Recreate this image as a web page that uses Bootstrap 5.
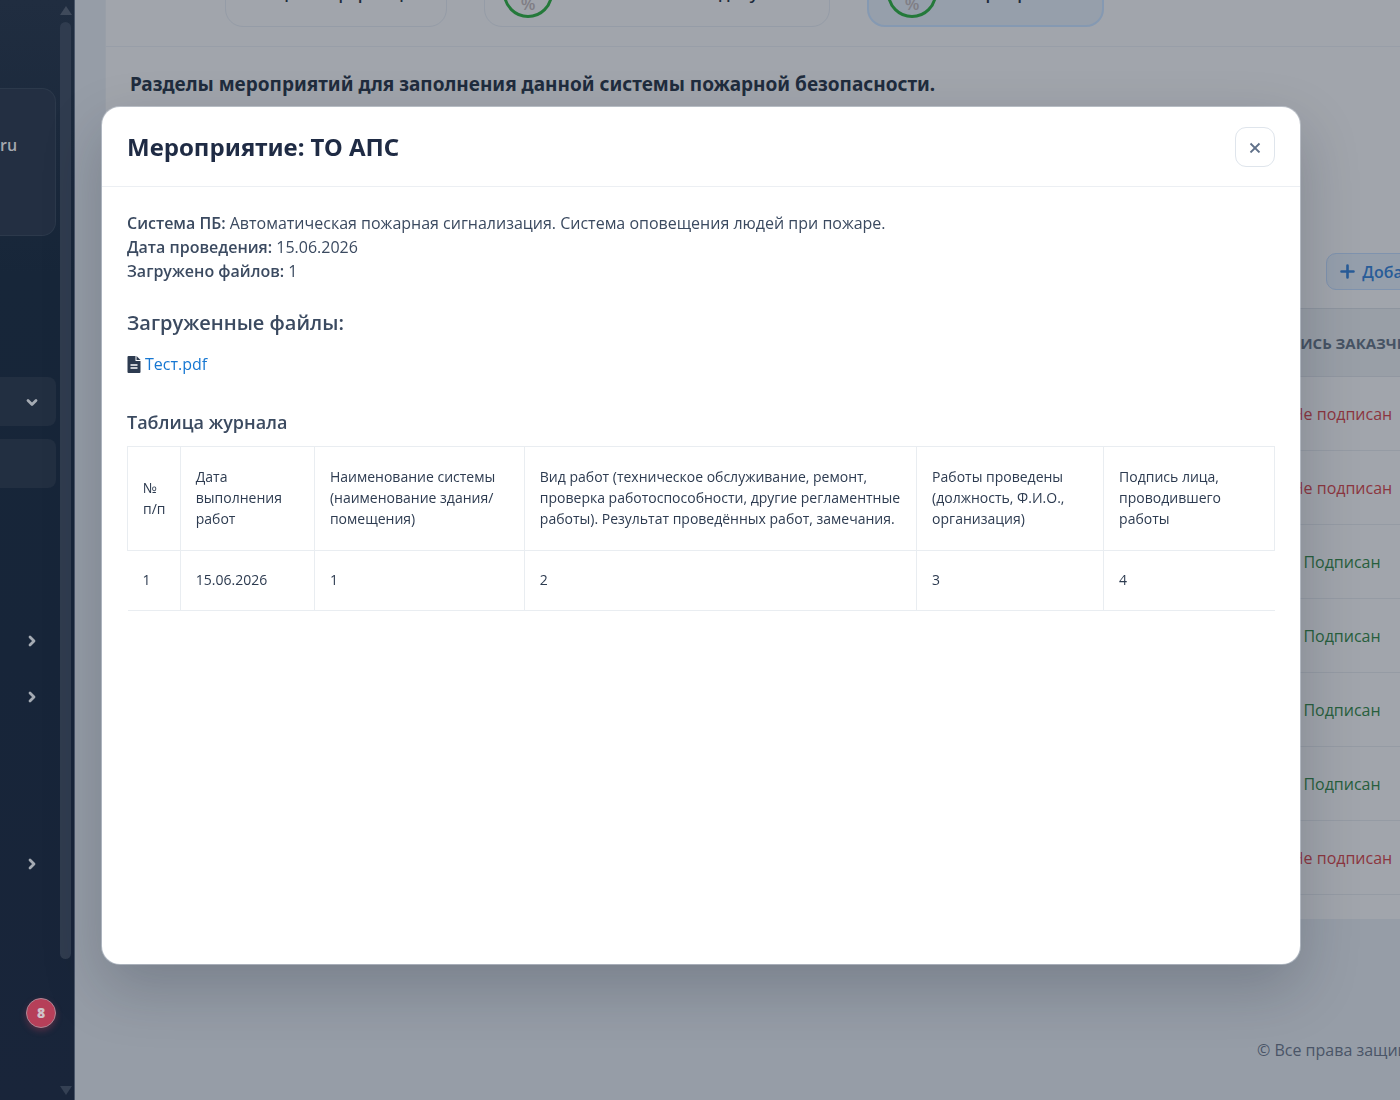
<!DOCTYPE html>
<html lang="ru">
<head>
<meta charset="utf-8">
<meta name="viewport" content="width=device-width, initial-scale=1">
<title>Мероприятие: ТО АПС</title>
<link href="https://cdn.jsdelivr.net/npm/bootstrap@5.3.0/dist/css/bootstrap.min.css" rel="stylesheet">
<style>
  body { font-family: "Open Sans", "Noto Sans", sans-serif; font-size: 16px; line-height: 24px; color: #3b4a60; background: #969da7; }
  .app-shell { height: 100vh; overflow: hidden; }

  /* sidebar */
  .side-panel { width: 75px; background: linear-gradient(180deg, #202d40 0%, #172639 25%, #172539 60%, #19253a 100%); border-right: 1px solid #4a5669; }
  .side-content { width: 56px; }
  .user-box { height: 148px; margin-top: 88px; padding-top: 44px; background: #232f42; border: 1px solid #2c394b; border-left: 0; border-radius: 0 14px 14px 0; color: #a5a8ae; font-size: 16px; font-weight: 600; white-space: nowrap; }
  .side-link { height: 49px; padding-right: 16px; color: #a5abb3; border-radius: 0 8px 8px 0; }
  .side-link.is-open { background: #222f41; }
  .menu-top { margin-top: 141px; gap: 13px; }
  .menu-mid { margin-top: 128px; gap: 7px; }
  .menu-low { margin-top: 118px; }
  .count-pill { width: 30px; height: 30px; margin-top: 110px; background: #b63f59; border: 1px solid #ad8795; color: #cfc3ca; font-size: 14px; font-weight: 800; box-shadow: 0 3px 6px rgba(182, 63, 89, .35); }
  .side-scroll { width: 18px; padding: 6px 3px 5px 4px; gap: 7px; }
  .scroll-thumb { width: 11px; flex: 0 0 86%; background: #303c4f; border-radius: 6px; }

  /* page */
  .page-main { padding-left: 30px; }
  .sheet { margin-right: -60px; background: #a1a5ac; border-left: 1px solid #999fa8; }
  .tab-strip { height: 47px; padding: 0 0 19px 119px; gap: 37px; border-bottom: 1px solid #989ea8; }
  .tab-chip { height: 68px; border: 1px solid #959ca7; border-radius: 18px; padding: 0 18px; gap: 12px; color: #202b3b; font-size: 17px; font-weight: 600; white-space: nowrap; background: none; }
  .chip-a { width: 222px; }
  .chip-b { width: 346px; }
  .chip-c { width: 237px; background: #969fab; border: 2px solid #8599b2; }
  .chip-c .chip-text { padding-left: 6px; }
  .ring { width: 50px; height: 50px; border: 3px solid #24793a; border-radius: 50%; color: #807e85; font-size: 17px; line-height: 17px; padding-bottom: 3px; }
  .sheet-title { font-family: "Noto Sans", "Open Sans", sans-serif; font-size: 19px; line-height: 24px; font-weight: 700; color: #202c3d; padding: 25px 24px 0; margin: 0; }
  .tools { padding: 157px 5px 18px 0; }
  .add-btn { height: 37px; padding: 0 13px; gap: 7px; border: 1px solid #7f93ae; border-radius: 10px; background: #959fac; color: #285c98; font-weight: 600; }
  .status-grid { width: 100%; border-top: 1px solid #8e959f; }
  .status-grid th { height: 68px; background: #999fa7; color: #465364; font-size: 15px; font-weight: 700; text-align: center; border-bottom: 1px solid #9197a1; white-space: nowrap; }
  .status-grid td { height: 74px; text-align: center; border-bottom: 1px solid #959ba4; }
  .status-grid .col-sign { width: 236px; }
  .st-no { color: #8c3640; }
  .st-yes { color: #285f3d; }
  .page-foot { padding: 119px 0 0 1152px; color: #4a5567; white-space: nowrap; }

  /* dialog */
  .dialog-layer { position: fixed; inset: 0; padding: 107px 100px 136px 102px; }
  .dialog-box { background: #fff; border-radius: 18px; box-shadow: 0 0 0 1px rgba(220, 226, 236, .45), 0 24px 60px rgba(15, 23, 42, .22); }
  .dialog-head { height: 80px; padding: 0 25px; border-bottom: 1px solid #eceff3; }
  .dialog-head h1 { font-family: "Noto Sans", "Open Sans", sans-serif; font-size: 24px; line-height: 32px; font-weight: 700; color: #1f2b44; margin: 0; }
  .x-btn { width: 40px; height: 40px; border: 1px solid #dfe5ec; border-radius: 11px; background: #fff; color: #5f7089; }
  .dialog-main { padding: 24px 25px; }
  .dialog-main strong { font-weight: 600; }
  .dialog-main h2 { font-size: 20px; line-height: 28px; font-weight: 600; margin: 26px 0 15px; }
  .dialog-main h3 { font-size: 18px; line-height: 24px; font-weight: 600; margin: 34px 0 12px; }
  .file-link { color: #1677d2; text-decoration: none; }
  .journal { width: 100%; table-layout: fixed; font-size: 14px; line-height: 21px; color: #2d3b50; }
  .journal th { height: 104px; font-weight: 400; padding: 0 0 2px 15px; border: 1px solid #e9edf1; white-space: nowrap; }
  .journal td { height: 60px; padding: 0 0 2px 15px; border: 1px solid #e9edf1; }
  .journal td:first-child { border-left: 0; }
  .journal td:last-child { border-right: 0; }
</style>
<script src="https://cdn.jsdelivr.net/npm/bootstrap@5.3.0/dist/js/bootstrap.bundle.min.js"></script>
</head>
<body>
<div class="app-shell d-flex">
  <aside class="side-panel d-flex flex-shrink-0">
    <div class="side-content d-flex flex-column">
      <div class="user-box flex-shrink-0">ru</div>
      <nav>
        <div class="menu-top d-flex flex-column">
          <a href="#" class="side-link is-open d-flex align-items-center justify-content-end" aria-label="Раздел">
            <svg width="16" height="16" viewBox="0 0 16 16" fill="none" stroke="currentColor" stroke-width="2.8" stroke-linecap="round" stroke-linejoin="round"><path d="M4 6.5l4 4 4-4"/></svg></a>
          <a href="#" class="side-link is-open" aria-label="Подраздел"></a>
        </div>
        <div class="menu-mid d-flex flex-column">
          <a href="#" class="side-link d-flex align-items-center justify-content-end" aria-label="Раздел">
            <svg width="16" height="16" viewBox="0 0 16 16" fill="none" stroke="currentColor" stroke-width="2.8" stroke-linecap="round" stroke-linejoin="round"><path d="M6 4l4 4-4 4"/></svg></a>
          <a href="#" class="side-link d-flex align-items-center justify-content-end" aria-label="Раздел">
            <svg width="16" height="16" viewBox="0 0 16 16" fill="none" stroke="currentColor" stroke-width="2.8" stroke-linecap="round" stroke-linejoin="round"><path d="M6 4l4 4-4 4"/></svg></a>
        </div>
        <div class="menu-low">
          <a href="#" class="side-link d-flex align-items-center justify-content-end" aria-label="Раздел">
            <svg width="16" height="16" viewBox="0 0 16 16" fill="none" stroke="currentColor" stroke-width="2.8" stroke-linecap="round" stroke-linejoin="round"><path d="M6 4l4 4-4 4"/></svg></a>
        </div>
      </nav>
      <span class="count-pill rounded-circle d-flex align-items-center justify-content-center align-self-end">8</span>
    </div>
    <div class="side-scroll d-flex flex-column align-items-center">
      <svg class="flex-shrink-0" width="12" height="9" viewBox="0 0 12 9"><path d="M6 0l6 9H0z" fill="#3f4a5b"/></svg>
      <div class="scroll-thumb"></div>
      <svg class="flex-shrink-0 mt-auto" width="12" height="9" viewBox="0 0 12 9"><path d="M6 9L0 0h12z" fill="#344053"/></svg>
    </div>
  </aside>

  <main class="page-main flex-grow-1 overflow-hidden">
    <section class="sheet">
      <div class="tab-strip d-flex align-items-end">
        <button type="button" class="tab-chip chip-a d-flex align-items-center justify-content-center flex-shrink-0">Общая информация</button>
        <button type="button" class="tab-chip chip-b d-flex align-items-center flex-shrink-0">
          <span class="ring d-flex align-items-end justify-content-center flex-shrink-0">%</span><span>Исполнительные документы</span></button>
        <button type="button" class="tab-chip chip-c d-flex align-items-center flex-shrink-0">
          <span class="ring d-flex align-items-end justify-content-center flex-shrink-0">%</span><span class="chip-text flex-grow-1">Мероприятия</span></button>
      </div>
      <h2 class="sheet-title">Разделы мероприятий для заполнения данной системы пожарной безопасности.</h2>
      <div class="tools d-flex justify-content-end">
        <button type="button" class="add-btn d-flex align-items-center">
          <svg width="15" height="15" viewBox="0 0 15 15" fill="none" stroke="currentColor" stroke-width="2.6" stroke-linecap="round"><path d="M7.500 1.500v12M1.500 7.500h12"/></svg>Добавить</button>
      </div>
      <table class="status-grid">
        <thead><tr><th></th><th class="col-sign">ПОДПИСЬ ЗАКАЗЧИКА</th></tr></thead>
        <tbody>
          <tr><td></td><td class="st-no">Не подписан</td></tr>
          <tr><td></td><td class="st-no">Не подписан</td></tr>
          <tr><td></td><td class="st-yes">Подписан</td></tr>
          <tr><td></td><td class="st-yes">Подписан</td></tr>
          <tr><td></td><td class="st-yes">Подписан</td></tr>
          <tr><td></td><td class="st-yes">Подписан</td></tr>
          <tr><td></td><td class="st-no">Не подписан</td></tr>
        </tbody>
      </table>
      <div class="pb-4"></div>
    </section>
    <footer class="page-foot">© Все права защищены</footer>
  </main>
</div>

<div class="dialog-layer d-flex">
  <div class="dialog-box flex-grow-1" role="dialog" aria-modal="true" aria-labelledby="dlgTitle">
    <div class="dialog-head d-flex align-items-center justify-content-between">
      <h1 id="dlgTitle">Мероприятие: ТО АПС</h1>
      <button type="button" class="x-btn d-flex align-items-center justify-content-center p-0" aria-label="Закрыть">
        <svg width="12" height="12" viewBox="0 0 12 12" fill="none" stroke="currentColor" stroke-width="1.8"><path d="M1.500 2.500l9 9M10.500 2.500l-9 9"/></svg></button>
    </div>
    <div class="dialog-main">
      <div><strong>Система ПБ:</strong> Автоматическая пожарная сигнализация. Система оповещения людей при пожаре.</div>
      <div><strong>Дата проведения:</strong> 15.06.2026</div>
      <div><strong>Загружено файлов:</strong> 1</div>
      <h2>Загруженные файлы:</h2>
      <div class="d-flex align-items-center gap-1">
        <svg width="14" height="17" viewBox="0 0 13 17"><path fill="#2d3b50" d="M1 0h7v5h5v11a1 1 0 0 1-1 1H1a1 1 0 0 1-1-1V1a1 1 0 0 1 1-1zM9 0l4 4H9z"/><path stroke="#fff" stroke-width="1.300" d="M3 9h7M3 12h7"/></svg>
        <a href="#" class="file-link">Тест.pdf</a>
      </div>
      <h3>Таблица журнала</h3>
      <table class="journal">
        <colgroup><col style="width:4.6%"><col style="width:11.7%"><col style="width:18.3%"><col style="width:34.2%"><col style="width:16.3%"><col style="width:14.9%"></colgroup>
        <thead><tr>
          <th>№<br>п/п</th>
          <th>Дата<br>выполнения<br>работ</th>
          <th>Наименование системы<br>(наименование здания/<br>помещения)</th>
          <th>Вид работ (техническое обслуживание, ремонт,<br>проверка работоспособности, другие регламентные<br>работы). Результат проведённых работ, замечания.</th>
          <th>Работы проведены<br>(должность, Ф.И.О.,<br>организация)</th>
          <th>Подпись лица,<br>проводившего<br>работы</th>
        </tr></thead>
        <tbody><tr><td>1</td><td>15.06.2026</td><td>1</td><td>2</td><td>3</td><td>4</td></tr></tbody>
      </table>
    </div>
  </div>
</div>
</body>
</html>
